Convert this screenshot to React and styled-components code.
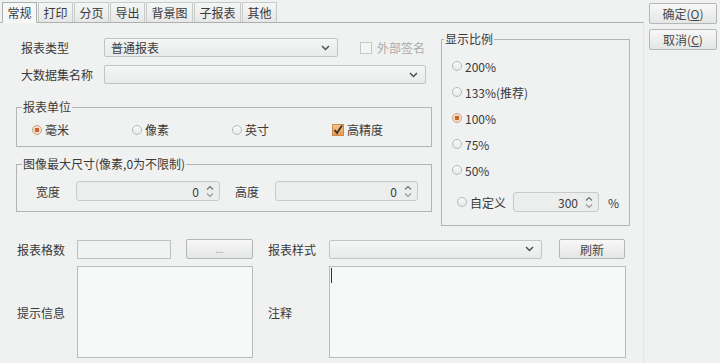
import styled, {createGlobalStyle} from 'styled-components';

const Global = createGlobalStyle`
    html, body {
        margin: 0;
        padding: 0;
        background: #f0f1f1;
    }
    body {
        font-family: "Noto Sans CJK SC", "Noto Sans", sans-serif;
        font-size: 12px;
        color: #3a3a3a;
    }
    * { box-sizing: border-box; }
`;

const Root = styled.div`
    display: flex;
    width: 720px;
    height: 363px;
    overflow: hidden;
`;

const Main = styled.div`
    width: 644px;
    display: flex;
    flex-direction: column;
`;

const TabStrip = styled.div`
    display: flex;
    gap: 1px;
    padding: 2px 0 0 2px;
    height: 22px;
    position: relative;
    z-index: 1;
`;

const Tab = styled.div`
    height: ${p => p.$active ? '21px' : '20px'};
    padding: 0 4.5px;
    line-height: 19px;
    border: 1px solid ${p => p.$active ? '#aeb0b0' : '#c8caca'};
    border-bottom: ${p => p.$active ? '1px solid #f6f7f7' : 'none'};
    background: ${p => p.$active ? '#f6f7f7' : 'linear-gradient(#f5f6f6, #e6e7e7)'};
    color: #3a3a3a;
    white-space: nowrap;
`;

const Panel = styled.div`
    flex: 1;
    border-top: 1px solid #aeb0b0;
    border-right: 1px solid #e3e4e4;
    padding: 9px 0 0 16px;
`;

const Upper = styled.div`
    display: grid;
    grid-template-columns: 416px 189px;
    column-gap: 9px;
    align-items: start;
`;

const LeftCol = styled.div`
    padding-top: 6px;
    display: flex;
    flex-direction: column;
`;

const Row = styled.div`
    display: flex;
    align-items: center;
    height: 19px;
    padding-left: 5px;
    margin-top: ${p => p.$top || 0}px;
`;

const Label = styled.span`
    flex: none;
    width: ${p => p.$w || 83}px;
    padding-left: ${p => p.$pad || 0}px;
    white-space: nowrap;
`;

const Combo = styled.div`
    flex: none;
    width: ${p => p.$w}px;
    height: 19px;
    border: 1px solid #c3c5c5;
    border-radius: 2px;
    background: linear-gradient(#f4f5f5, #e9eaea);
    display: flex;
    align-items: center;
    justify-content: space-between;
    padding: 0 7px 0 6px;
`;

const Chevron = () => (
    <svg width="9" height="6" viewBox="0 0 9 6">
        <path d="M1 1 L4.5 4.5 L8 1" fill="none" stroke="#505050" strokeWidth="1.5"/>
    </svg>
);

const SpinArrows = () => (
    <svg width="8" height="13" viewBox="0 0 8 13">
        <path d="M1 4.5 L4 1.5 L7 4.5" fill="none" stroke="#707070" strokeWidth="1.2"/>
        <path d="M1 8.5 L4 11.5 L7 8.5" fill="none" stroke="#9a9a9a" strokeWidth="1.2"/>
    </svg>
);

const CheckItem = styled.label`
    display: flex;
    align-items: center;
    gap: ${p => p.$gap || 4}px;
    margin-left: ${p => p.$left || 0}px;
    color: ${p => p.$disabled ? '#a9abab' : '#3a3a3a'};
    white-space: nowrap;
`;

const CheckBox = styled.span`
    width: 12px;
    height: 12px;
    border: 1px solid ${p => p.$checked ? '#c98a4a' : '#c6c8c8'};
    background: ${p => p.$checked ? 'linear-gradient(#f7c58c, #e89a4e)' : '#f4f5f5'};
    display: flex;
    align-items: center;
    justify-content: center;
`;

const Tick = () => (
    <svg width="10" height="10" viewBox="0 0 10 10">
        <path d="M1.5 5 L4 8 L9 0.5" fill="none" stroke="#3a3030" strokeWidth="1.8"/>
    </svg>
);

const RadioItem = styled.label`
    display: flex;
    align-items: center;
    gap: 3px;
    height: ${p => p.$h || 16}px;
    padding-left: ${p => p.$indent || 0}px;
    white-space: nowrap;
`;

const RadioDot = styled.span`
    flex: none;
    width: 10px;
    height: 10px;
    border-radius: 50%;
    border: 1px solid ${p => p.$on ? '#c9a080' : '#b8baba'};
    background: ${p => p.$on
        ? 'radial-gradient(circle, #c8662a 0 2.2px, #f3e2d4 2.6px)'
        : 'linear-gradient(#fafafa, #e8e9e9)'};
`;

const Group = styled.fieldset`
    margin: ${p => p.$top || 0}px 0 0 0;
    padding: 0;
    min-width: 0;
    border: 1px solid #b3b5b5;
`;

const Legend = styled.legend`
    margin-left: ${p => p.$left ?? 5}px;
    padding: 0 1px;
    line-height: 14px;
    font-size: 12px;
`;

const UnitRow = styled.div`
    display: grid;
    grid-template-columns: repeat(4, 100px);
    align-items: center;
    padding: 7px 0 8px 15px;
`;

const SizeRow = styled.div`
    display: flex;
    align-items: center;
    padding: 10px 0 10px 19px;
`;

const Spinner = styled.div`
    flex: none;
    width: ${p => p.$w}px;
    height: 20px;
    margin-left: ${p => p.$left || 0}px;
    border: 1px solid #c9cbcb;
    border-radius: 3px;
    background: #eceeee;
    display: flex;
    align-items: center;
    justify-content: flex-end;
    gap: 7px;
    padding-right: 5px;
`;

const ScaleList = styled.div`
    display: flex;
    flex-direction: column;
    gap: 10px;
    padding: 12px 0 13px 10px;
`;

const CustomRow = styled.div`
    display: flex;
    align-items: center;
    margin-top: 4px;
    height: 20px;
`;

const Percent = styled.span`
    margin-left: 9px;
`;

const Lower = styled.div`
    display: grid;
    grid-template-columns: 236px 358px;
    column-gap: 15px;
    margin: 13px 0 0 1px;
`;

const Half = styled.div`
    display: grid;
    grid-template-columns: ${p => p.$label}px 1fr;
    grid-template-rows: 20px 92px;
    row-gap: 7px;
    align-items: center;
`;

const FieldLine = styled.div`
    display: flex;
    align-items: center;
`;

const Input = styled.div`
    width: ${p => p.$w}px;
    height: 19px;
    border: 1px solid #bfc1c1;
    background: #f1f2f2;
`;

const Button = styled.div`
    flex: none;
    width: ${p => p.$w}px;
    height: ${p => p.$h || 20}px;
    margin-left: ${p => p.$left || 0}px;
    border: 1px solid #b5b7b7;
    border-radius: 2px;
    background: linear-gradient(#f8f8f8, #e4e5e5);
    display: flex;
    align-items: center;
    justify-content: center;
    color: ${p => p.$muted ? '#9a9a9a' : '#474747'};
    font-size: ${p => p.$muted ? '9px' : '12px'};
    white-space: nowrap;
`;

const TextArea = styled.div`
    width: ${p => p.$w}px;
    height: 92px;
    border: 1px solid #b9bbbb;
    background: #f7f8f8;
    padding: 1px 0 0 1px;
`;

const Caret = styled.span`
    display: block;
    width: 1px;
    height: 15px;
    background: #333;
`;

const Side = styled.div`
    display: flex;
    flex-direction: column;
    gap: 5px;
    padding: 3px 0 0 5px;
`;

const tabs = ['常规', '打印', '分页', '导出', '背景图', '子报表', '其他'];
const scales = [
    {t: '200%'},
    {t: '133%(推荐)'},
    {t: '100%', on: true},
    {t: '75%'},
    {t: '50%'},
];

export default function App() {
    return (
        <Root>
            <Global />
            <Main>
                <TabStrip>
                    {tabs.map((t, i) => <Tab key={t} $active={i === 0}>{t}</Tab>)}
                </TabStrip>
                <Panel>
                    <Upper>
                        <LeftCol>
                            <Row>
                                <Label>报表类型</Label>
                                <Combo $w={234}><span>普通报表</span><Chevron /></Combo>
                                <CheckItem $left={22} $gap={5} $disabled>
                                    <CheckBox />外部签名
                                </CheckItem>
                            </Row>
                            <Row $top={8}>
                                <Label>大数据集名称</Label>
                                <Combo $w={322}><span /><Chevron /></Combo>
                            </Row>
                            <Group $top={16}>
                                <Legend>报表单位</Legend>
                                <UnitRow>
                                    <RadioItem><RadioDot $on />毫米</RadioItem>
                                    <RadioItem><RadioDot />像素</RadioItem>
                                    <RadioItem><RadioDot />英寸</RadioItem>
                                    <CheckItem $gap={3}>
                                        <CheckBox $checked><Tick /></CheckBox>高精度
                                    </CheckItem>
                                </UnitRow>
                            </Group>
                            <Group $top={10}>
                                <Legend>图像最大尺寸(像素,0为不限制)</Legend>
                                <SizeRow>
                                    <Label $w={40}>宽度</Label>
                                    <Spinner $w={144}><span>0</span><SpinArrows /></Spinner>
                                    <Label $w={55} $pad={15}>高度</Label>
                                    <Spinner $w={143}><span>0</span><SpinArrows /></Spinner>
                                </SizeRow>
                            </Group>
                        </LeftCol>
                        <Group>
                            <Legend $left={2}>显示比例</Legend>
                            <ScaleList>
                                {scales.map(s => (
                                    <RadioItem key={s.t}><RadioDot $on={s.on} />{s.t}</RadioItem>
                                ))}
                                <CustomRow>
                                    <RadioItem $indent={5} $h={20}><RadioDot />自定义</RadioItem>
                                    <Spinner $w={86} $left={7}><span>300</span><SpinArrows /></Spinner>
                                    <Percent>%</Percent>
                                </CustomRow>
                            </ScaleList>
                        </Group>
                    </Upper>
                    <Lower>
                        <Half $label={60}>
                            <Label>报表格数</Label>
                            <FieldLine>
                                <Input $w={94} />
                                <Button $w={67} $left={15} $muted>...</Button>
                            </FieldLine>
                            <Label>提示信息</Label>
                            <TextArea $w={176} />
                        </Half>
                        <Half $label={61}>
                            <Label>报表样式</Label>
                            <FieldLine>
                                <Combo $w={213}><span /><Chevron /></Combo>
                                <Button $w={66} $left={17}>刷新</Button>
                            </FieldLine>
                            <Label>注释</Label>
                            <TextArea $w={297}><Caret /></TextArea>
                        </Half>
                    </Lower>
                </Panel>
            </Main>
            <Side>
                <Button $w={68} $h={21}>确定(<u>O</u>)</Button>
                <Button $w={68} $h={21}>取消(<u>C</u>)</Button>
            </Side>
        </Root>
    );
}
